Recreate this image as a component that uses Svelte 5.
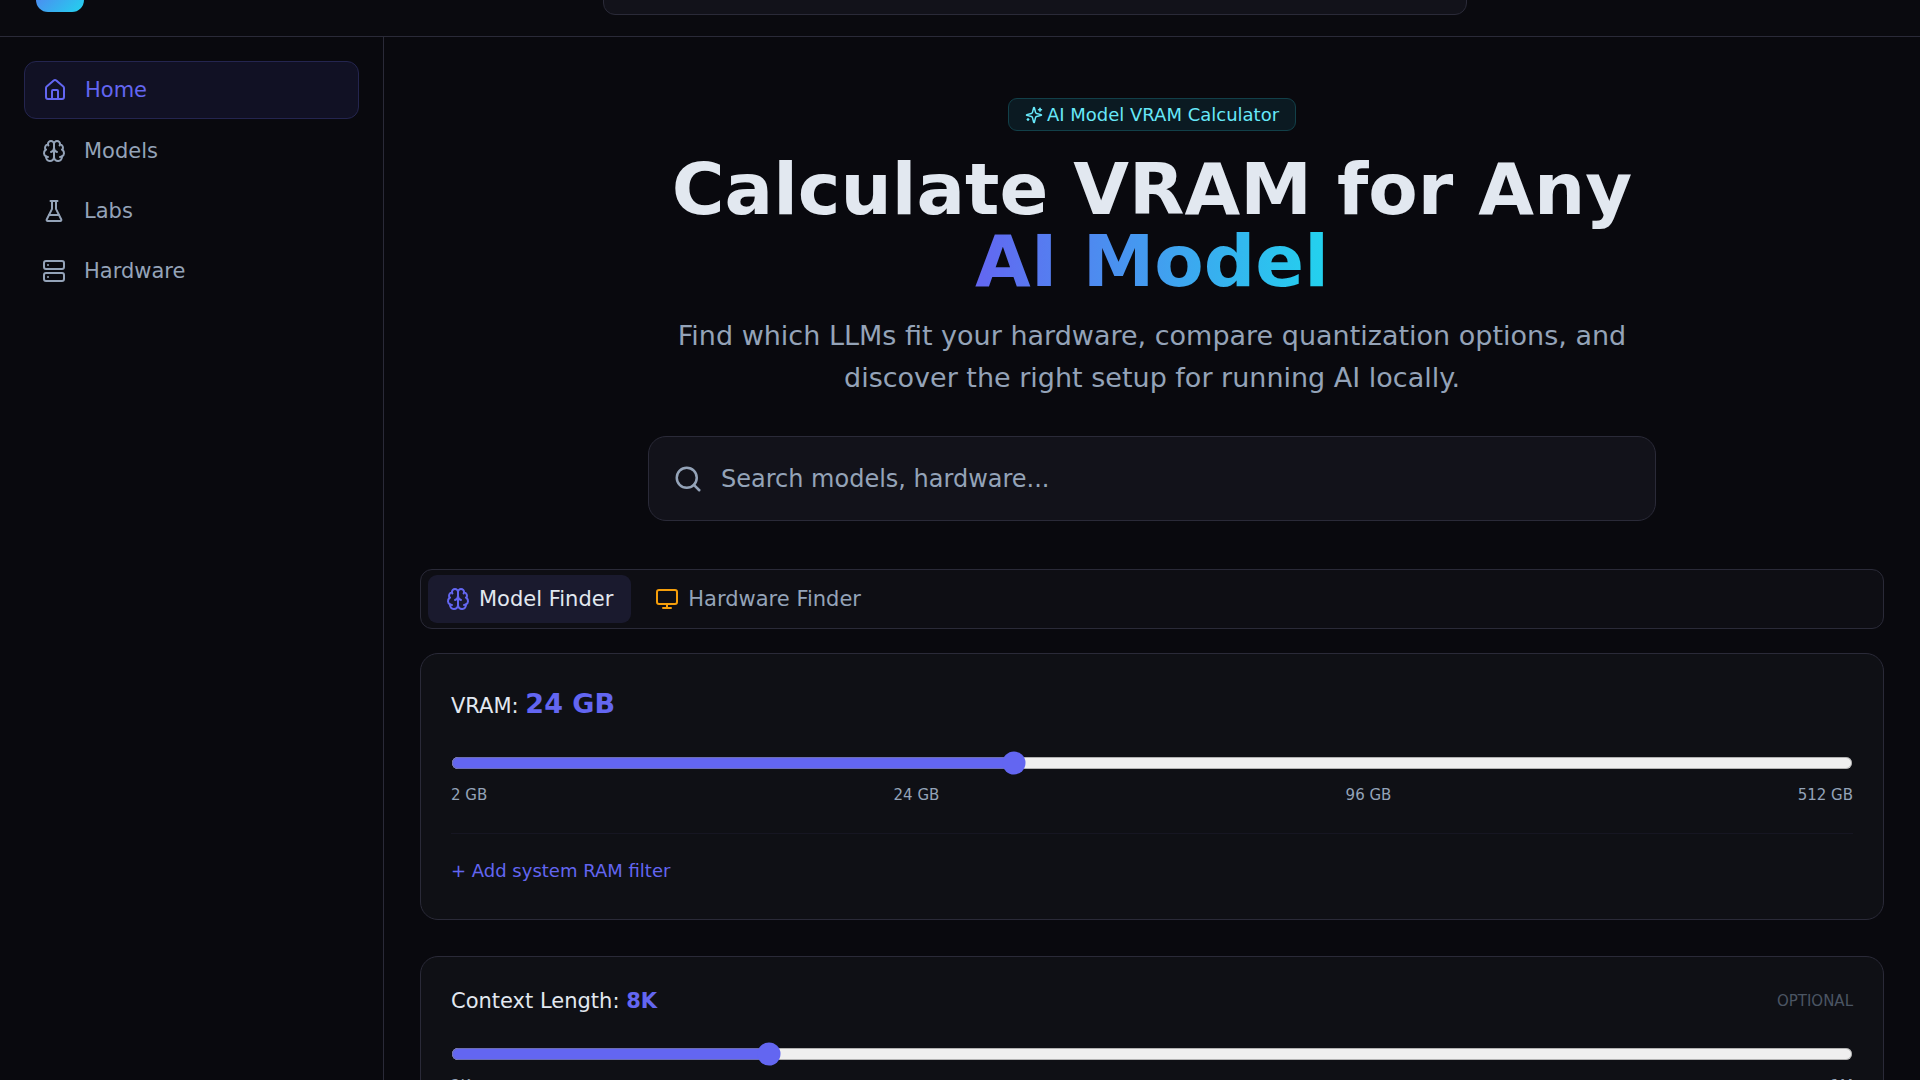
<script lang="ts">
  type IconName = 'home' | 'brain' | 'flask' | 'server' | 'monitor' | 'search' | 'sparkles';

  const navItems: { label: string; icon: IconName; href: string }[] = [
    { label: 'Home', icon: 'home', href: '#home' },
    { label: 'Models', icon: 'brain', href: '#models' },
    { label: 'Labs', icon: 'flask', href: '#labs' },
    { label: 'Hardware', icon: 'server', href: '#hardware' }
  ];

  const tabs: { id: string; label: string; icon: IconName }[] = [
    { id: 'model', label: 'Model Finder', icon: 'brain' },
    { id: 'hardware', label: 'Hardware Finder', icon: 'monitor' }
  ];

  const vramSteps = [2, 8, 12, 16, 24, 48, 96, 128, 192, 256, 512];
  const contextSteps = ['2K', '4K', '8K', '16K', '32K', '64K', '128K', '256K', '512K', '1M'];

  let current = $state('Home');
  let activeTab = $state('model');
  let query = $state('');
  let vramIndex = $state(4);
  let contextIndex = $state(2);
  let showRam = $state(false);

  let vram = $derived(vramSteps[vramIndex]);
  let context = $derived(contextSteps[contextIndex]);
</script>

{#snippet icon(name: IconName)}
  <svg class="icon icon-{name}" viewBox="0 0 24 24" aria-hidden="true">
    {#if name === 'home'}
      <path d="M15 21v-8a1 1 0 0 0-1-1h-4a1 1 0 0 0-1 1v8" />
      <path d="M3 10a2 2 0 0 1 .709-1.528l7-5.999a2 2 0 0 1 2.582 0l7 5.999A2 2 0 0 1 21 10v9a2 2 0 0 1-2 2H5a2 2 0 0 1-2-2z" />
    {:else if name === 'brain'}
      <path d="M12 5a3 3 0 1 0-5.997.125 4 4 0 0 0-2.526 5.77 4 4 0 0 0 .556 6.588A4 4 0 1 0 12 18Z" />
      <path d="M12 5a3 3 0 1 1 5.997.125 4 4 0 0 1 2.526 5.77 4 4 0 0 1-.556 6.588A4 4 0 1 1 12 18Z" />
      <path d="M15 13a4.5 4.5 0 0 1-3-4 4.5 4.5 0 0 1-3 4" />
      <path d="M17.599 6.5a3 3 0 0 0 .399-1.375" />
      <path d="M6.003 5.125A3 3 0 0 0 6.401 6.5" />
      <path d="M3.477 10.896a4 4 0 0 1 .585-.396" />
      <path d="M19.938 10.5a4 4 0 0 1 .585.396" />
      <path d="M6 18a4 4 0 0 1-1.967-.516" />
      <path d="M19.967 17.484A4 4 0 0 1 18 18" />
    {:else if name === 'flask'}
      <path d="M10 2v7.527a2 2 0 0 1-.211.896L4.72 20.55a1 1 0 0 0 .9 1.45h12.76a1 1 0 0 0 .9-1.45l-5.069-10.127A2 2 0 0 1 14 9.527V2" />
      <path d="M8.5 2h7" />
      <path d="M7 16h10" />
    {:else if name === 'server'}
      <rect width="20" height="8" x="2" y="2" rx="2" />
      <rect width="20" height="8" x="2" y="14" rx="2" />
      <path d="M6 6h.01" />
      <path d="M6 18h.01" />
    {:else if name === 'monitor'}
      <rect width="20" height="14" x="2" y="3" rx="2" />
      <path d="M8 21h8" />
      <path d="M12 17v4" />
    {:else if name === 'search'}
      <circle cx="11" cy="11" r="8" />
      <path d="m21 21-4.3-4.3" />
    {:else if name === 'sparkles'}
      <path d="M9.937 15.5A2 2 0 0 0 8.5 14.063l-6.135-1.582a.5.5 0 0 1 0-.962L8.5 9.936A2 2 0 0 0 9.937 8.5l1.582-6.135a.5.5 0 0 1 .963 0L14.063 8.5A2 2 0 0 0 15.5 9.937l6.135 1.581a.5.5 0 0 1 0 .964L15.5 14.063a2 2 0 0 0-1.437 1.437l-1.582 6.135a.5.5 0 0 1-.963 0z" />
      <path d="M20 3v4" />
      <path d="M22 5h-4" />
      <path d="M4 17v2" />
      <path d="M5 18H3" />
    {/if}
  </svg>
{/snippet}

<div class="app">
  <header class="topbar">
    <a class="logo" href="#home" aria-label="Home"></a>
    <input class="top-search" type="search" aria-label="Search" bind:value={query} />
  </header>

  <div class="layout">
    <nav class="sidebar">
      {#each navItems as item}
        <a
          class="nav-item"
          class:active={current === item.label}
          href={item.href}
          onclick={() => (current = item.label)}
        >
          {@render icon(item.icon)}
          {item.label}
        </a>
      {/each}
    </nav>

    <main>
      <section class="hero">
        <span class="badge">{@render icon('sparkles')}AI Model VRAM Calculator</span>
        <h1>Calculate VRAM for Any <span class="gradient">AI Model</span></h1>
        <p>
          Find which LLMs fit your hardware, compare quantization options, and discover the right
          setup for running AI locally.
        </p>
        <label class="hero-search">
          {@render icon('search')}
          <input
            type="text"
            placeholder="Search models, hardware..."
            aria-label="Search models, hardware"
            bind:value={query}
          />
        </label>
      </section>

      <div class="tabs" role="tablist">
        {#each tabs as tab}
          <button
            role="tab"
            aria-selected={activeTab === tab.id}
            class:active={activeTab === tab.id}
            onclick={() => (activeTab = tab.id)}
          >
            {@render icon(tab.icon)}
            {tab.label}
          </button>
        {/each}
      </div>

      <section class="card vram">
        <div class="card-head">
          <label class="title" for="vram">VRAM: <strong>{vram} GB</strong></label>
        </div>
        <input id="vram" type="range" min="0" max={vramSteps.length - 1} bind:value={vramIndex} />
        <div class="ticks">
          <span>2 GB</span>
          <span>24 GB</span>
          <span>96 GB</span>
          <span>512 GB</span>
        </div>
        <div class="extra">
          <button class="link" onclick={() => (showRam = !showRam)}>+ Add system RAM filter</button>
        </div>
      </section>

      <section class="card context">
        <div class="card-head">
          <label class="title" for="context">Context Length: <strong>{context}</strong></label>
          <span class="optional">OPTIONAL</span>
        </div>
        <input id="context" type="range" min="0" max={contextSteps.length - 1} bind:value={contextIndex} />
        <div class="ticks">
          <span>2K</span>
          <span>1M</span>
        </div>
      </section>
    </main>
  </div>
</div>

<style>
  :global(html) {
    scrollbar-width: none;
  }

  :global(body) {
    background: #09090e;
  }

  .app {
    color: #e2e8f0;
    font-family: "DejaVu Sans", sans-serif;
    font-size: 21px;
    line-height: 32px;
  }

  .icon {
    width: 24px;
    height: 24px;
    flex-shrink: 0;
    fill: none;
    stroke: currentColor;
    stroke-width: 2;
    stroke-linecap: round;
    stroke-linejoin: round;
  }

  /* the bar is mostly scrolled out of view */
  .topbar {
    display: grid;
    grid-template-columns: 19fr 864px 14fr;
    align-items: center;
    box-sizing: border-box;
    height: 98px;
    margin-top: -61px;
    padding: 0 36px;
    border-bottom: 1px solid #2a2a38;
    background: #0a0a0f;
  }

  .logo {
    width: 48px;
    height: 48px;
    border-radius: 12px;
    background: linear-gradient(135deg, #6366f1, #22d3ee);
  }

  .top-search {
    box-sizing: border-box;
    height: 54px;
    border: 1px solid #2a2a38;
    border-radius: 12px;
    background: #12121a;
    color: inherit;
  }

  .layout {
    display: grid;
    grid-template-columns: 384px 1fr;
    min-height: 100vh;
  }

  .sidebar {
    display: flex;
    flex-direction: column;
    gap: 4px;
    padding: 24px;
    border-right: 1px solid #2a2a38;
  }

  .nav-item {
    display: flex;
    align-items: center;
    gap: 18px;
    padding: 12px 18px;
    border-radius: 12px;
    color: #94a3b8;
    text-decoration: none;
  }

  .nav-item.active {
    border: 1px solid #24254f;
    background: #111124;
    color: #6366f1;
  }

  main {
    padding: 61px 36px;
  }

  .hero {
    display: flex;
    flex-direction: column;
    align-items: center;
    max-width: 1008px;
    margin: 0 auto 48px;
    text-align: center;
  }

  .badge {
    display: flex;
    align-items: center;
    gap: 4px;
    padding: 2px 16px;
    border: 1px solid #124049;
    border-radius: 9px;
    background: #0b1a22;
    color: #67e8f9;
    font-size: 18px;
    line-height: 27px;
  }

  .badge .icon {
    width: 18px;
    height: 18px;
  }

  h1 {
    margin: 22px 0 18px;
    font-size: 72px;
    line-height: 72px;
  }

  .gradient {
    display: table;
    margin: 0 auto;
    background: linear-gradient(90deg, #6366f1, #22d3ee);
    background-clip: text;
    color: transparent;
  }

  .hero p {
    max-width: 960px;
    margin: 0 0 37px;
    color: #94a3b8;
    font-size: 27px;
    line-height: 42px;
  }

  .hero-search {
    display: flex;
    align-items: center;
    gap: 18px;
    box-sizing: border-box;
    width: 100%;
    padding: 0 24px;
    border: 1px solid #2a2a38;
    border-radius: 18px;
    background: #12121a;
    color: #94a3b8;
  }

  .hero-search .icon {
    width: 30px;
    height: 30px;
  }

  .hero-search input {
    flex: 1;
    height: 83px;
    padding: 0;
    border: 0;
    outline: 0;
    background: none;
    color: #e2e8f0;
    font: inherit;
    font-size: 24px;
  }

  .hero-search input::placeholder {
    color: #94a3b8;
  }

  .tabs {
    display: flex;
    gap: 6px;
    margin-bottom: 24px;
    padding: 5px 7px;
    border: 1px solid #2a2a38;
    border-radius: 12px;
    background: #0e0e14;
  }

  .tabs button {
    display: flex;
    align-items: center;
    gap: 9px;
    padding: 8px 18px;
    border: 0;
    border-radius: 9px;
    background: none;
    color: #94a3b8;
    font: inherit;
    cursor: pointer;
  }

  .tabs button.active {
    background: #1a1a2e;
    color: #e2e8f0;
  }

  .tabs .icon-brain {
    color: #6366f1;
  }

  .tabs .icon-monitor {
    color: #f59e0b;
  }

  .card {
    margin-bottom: 36px;
    padding: 30px;
    border: 1px solid #2a2a38;
    border-radius: 18px;
    background: #0f1015;
  }

  .card-head {
    display: flex;
    align-items: center;
    justify-content: space-between;
    margin-bottom: 25px;
  }

  .title strong {
    color: #6366f1;
  }

  .vram .title {
    line-height: 40px;
  }

  .vram strong {
    font-size: 27px;
  }

  /* keeps the native slider, scaled up with the rest of the type */
  input[type="range"] {
    display: block;
    width: 100%;
    margin: 0;
    accent-color: #6366f1;
    zoom: 1.5;
  }

  .ticks {
    display: flex;
    justify-content: space-between;
    margin-top: 8px;
    color: #94a3b8;
    font-size: 15px;
    line-height: 24px;
  }

  .extra {
    margin-top: 26px;
    padding: 23px 0 4px;
    border-top: 1px solid #161622;
  }

  .link {
    display: block;
    padding: 0;
    border: 0;
    background: none;
    color: #6366f1;
    font: inherit;
    font-size: 18px;
    line-height: 28px;
    cursor: pointer;
  }

  .context {
    padding-top: 28px;
  }

  .optional {
    color: #4b5563;
    font-size: 15px;
  }
</style>
